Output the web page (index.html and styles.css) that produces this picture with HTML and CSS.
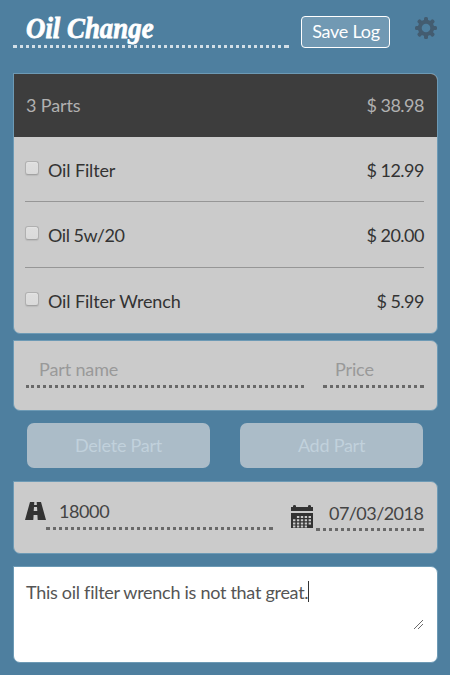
FILE: index.html
```html
<!DOCTYPE html>
<html lang="en">
<head>
<meta charset="utf-8">
<title>Oil Change</title>
<link rel="stylesheet" href="styles.css">
</head>
<body>
<header class="top">
  <h1 class="title dotted"><span>Oil Change</span></h1>
  <button class="save">Save Log</button>
  <svg class="gear" viewBox="0 0 24 24" aria-label="Settings">
    <g fill="#435c70">
      <rect x="10" y="1" width="4" height="22" rx="1.5"/>
      <rect x="10" y="1" width="4" height="22" rx="1.5" transform="rotate(45 12 12)"/>
      <rect x="10" y="1" width="4" height="22" rx="1.5" transform="rotate(90 12 12)"/>
      <rect x="10" y="1" width="4" height="22" rx="1.5" transform="rotate(135 12 12)"/>
      <circle cx="12" cy="12" r="8.2"/>
    </g>
    <circle cx="12" cy="12" r="4.3" fill="#4e7f9f"/>
  </svg>
</header>

<section class="panel parts">
  <div class="summary"><span>3 Parts</span><span class="amount">$ 38.98</span></div>
  <ul class="list">
    <li class="part"><i class="check"></i><span class="name">Oil Filter</span><span class="amount">$ 12.99</span></li>
    <li class="part"><i class="check"></i><span class="name numeric">Oil 5w/20</span><span class="amount">$ 20.00</span></li>
    <li class="part"><i class="check"></i><span class="name">Oil Filter Wrench</span><span class="amount">$ 5.99</span></li>
  </ul>
</section>

<section class="panel entry">
  <div class="field dotted part-name">Part name</div>
  <div class="field dotted price">Price</div>
</section>

<div class="actions">
  <button class="action">Delete Part</button>
  <button class="action">Add Part</button>
</div>

<section class="panel details">
  <svg class="road" viewBox="0 0 21 18">
    <path fill="#333" d="M5 0h4.300l-.2 3h2.800l-.2-3H16l5 18h-8.300l-.3-5H8.600l-.3 5H0zM9 5l-.3 4h3.600L12 5z" fill-rule="evenodd"/>
  </svg>
  <div class="field dotted miles">18000</div>
  <svg class="calendar" viewBox="0 0 22 23">
    <path fill="#333" d="M0 2h2V1q0-1 1.500-1T5 1v1h12V1q0-1 1.500-1T20 1v1h2v4H0zM0 8h22v15H0z"/>
    <g stroke="#cbcbcb" stroke-width="2" stroke-dasharray="2.400 1.500">
      <path d="M5.900 12H20M2 15.200H20M2 18.400H20M2 21.400H16"/>
    </g>
  </svg>
  <div class="field dotted date">07/03/2018</div>
</section>

<section class="panel notes">
  <p class="note">This oil filter wrench is not that great.<i class="caret"></i></p>
  <svg class="grip" viewBox="0 0 9 9"><path d="M0 9L9 0M4 9L9 4" stroke="#444" stroke-width=".8" fill="none"/></svg>
</section>
</body>
</html>
```
FILE: styles.css
```css
* { box-sizing: border-box; }
body {
  margin: 0;
  width: 450px;
  height: 675px;
  overflow: hidden;
  padding: 0 12px 0 13px;
  background: #4e7f9f;
  color: #333;
  font: 18px/24px Lato, sans-serif;
  letter-spacing: -.13px;
}
button { font: inherit; letter-spacing: -.25px; padding: 0 0 2px; }
svg { display: block; flex: none; }
.dotted {
  --dot: #696969;
  --phase: 1px;
  background-image: linear-gradient(var(--dot), var(--dot)), linear-gradient(var(--dot), var(--dot)), linear-gradient(90deg, var(--dot) 50%, transparent 50%);
  background-size: 3px 3px, 3px 3px, 6px 3px;
  background-position: 0 100%, 100% 100%, var(--phase) 100%;
  background-repeat: no-repeat, no-repeat, repeat-x;
}

.top { display: flex; height: 73px; }
.title {
  --dot: #d2dfe7;
  width: 276px;
  height: 48px;
  margin: 0;
  padding: 10px 0 0 13px;
  color: #fff;
  font: italic bold 30px/36px "Liberation Serif", serif;
  letter-spacing: 0;
}
.title span {
  display: inline-block;
  transform: scaleX(.895);
  transform-origin: 0 0;
  -webkit-text-stroke: .8px #fff;
  white-space: nowrap;
}
.save {
  width: 89px;
  height: 32px;
  margin: 16px 0 0 12px;
  padding-left: 1px;
  border: 1px solid #fff;
  border-radius: 4px;
  background: #7199b3;
  color: #fff;
}
.gear { width: 24px; height: 24px; margin: 16px 0 0 24px; }

.panel {
  width: 425px;
  border: 1px solid #6d9ab5;
  border-radius: 0 7px 7px 7px;
  background: #cbcbcb;
}
.parts { height: 261px; overflow: hidden; }
.summary {
  display: flex;
  justify-content: space-between;
  height: 63px;
  padding: 19px 13px 0 12px;
  background: #3d3d3d;
  color: #b1b1b1;
}
.list { margin: 0; padding: 0 13px 0 11px; list-style: none; }
.part { display: flex; height: 65px; padding-top: 21px; border-bottom: 1px solid #969696; }
.part:nth-child(2) { height: 66px; }
.part:last-child { border: 0; }
.name { flex: 1; }
.numeric { letter-spacing: -.45px; }
.amount { letter-spacing: -.5px; }
.check {
  width: 14px;
  height: 14px;
  margin: 3px 9px 0 0;
  border: 1px solid #b0b0b0;
  border-bottom-color: #a2a2a2;
  border-radius: 3px;
  background: linear-gradient(#dedede, #dadada);
  box-shadow: 0 1px 1px #bbb, inset 0 1px 1px #e4e4e4;
}

.entry { display: flex; height: 71px; margin-top: 6px; padding: 16px 0 0 12px; }
.field { height: 31px; }
.part-name { --phase: 5px; width: 278px; padding-left: 13px; margin-right: 19px; color: #999; }
.price { width: 101px; padding-left: 12px; color: #999; }

.actions { display: flex; gap: 30px; margin: 12px 0 13px 14px; }
.action {
  width: 183px;
  height: 45px;
  border: 0;
  border-radius: 7px;
  background: #abbcc8;
  color: #c1d1dc;
}

.details { display: flex; height: 73px; padding-left: 11px; }
.road { width: 21px; height: 18px; margin-top: 20px; }
.miles { width: 227px; margin-top: 17px; padding-left: 13px; color: #444; letter-spacing: -.4px; }
.calendar { width: 22px; height: 23px; margin: 23px 3px 0 18px; }
.date { width: 108px; height: 30px; margin-top: 19px; padding-left: 13px; color: #444; letter-spacing: -.55px; }

.notes { height: 97px; margin-top: 12px; padding: 13px 13px 0 12px; background: #fff; }
.note { display: flex; margin: 0; color: #555; letter-spacing: -.28px; white-space: nowrap; }
.caret { width: 1px; height: 21px; margin-top: 1px; background: #333; }
.grip { width: 9px; height: 9px; margin: 16px 1px 0 auto; }
```
